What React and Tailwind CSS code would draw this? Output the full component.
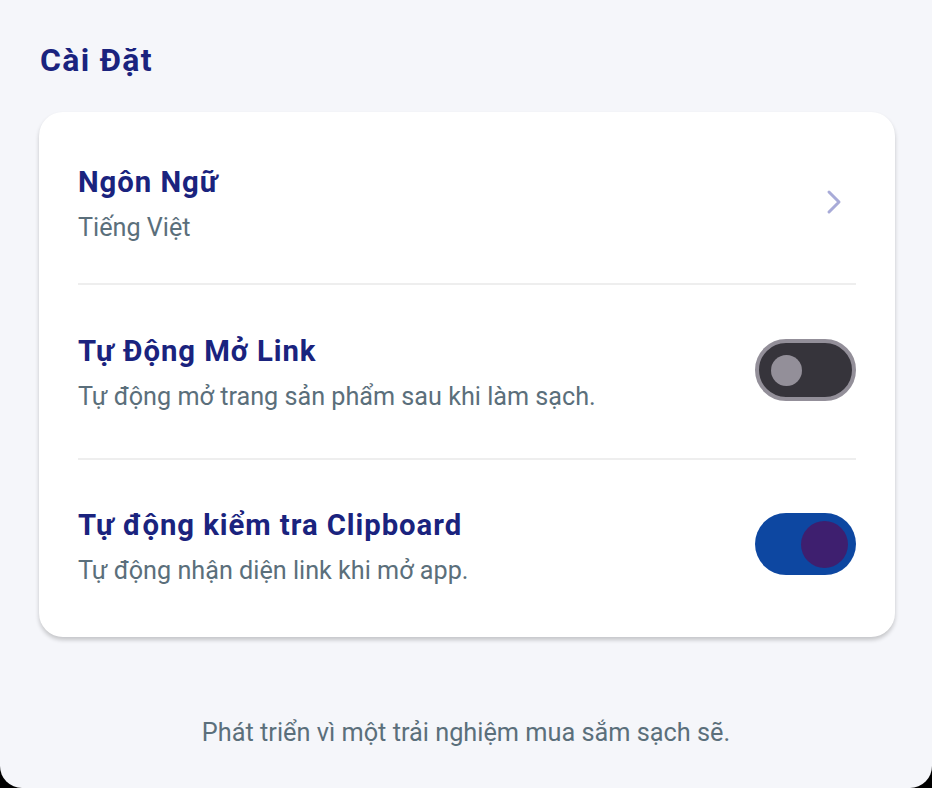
import { ChevronRight } from "lucide-react";

const font = { fontFamily: "Roboto, 'Noto Sans', sans-serif" };

const Toggle = ({ on }) =>
    on ? (
        <div className="w-[101px] h-[62px] mb-[6px] rounded-full bg-[#0d47a1] flex items-center justify-end pr-[8px] shrink-0">
            <div className="w-[47px] h-[47px] rounded-full bg-[#3e1f6f]" />
        </div>
    ) : (
        <div className="w-[101px] h-[62px] mb-[6px] rounded-full bg-[#36343b] border-[4px] border-[#938f99] flex items-center pl-[12px] shrink-0">
            <div className="w-[31px] h-[31px] rounded-full bg-[#938f99]" />
        </div>
    );

const Row = ({ title, subtitle, right, className }) => (
    <div className={`flex items-center justify-between ${className}`}>
        <div className="flex flex-col">
            <span className="text-[29.3px] leading-[32px] tracking-[0.95px] font-bold text-[#1a237e]">{title}</span>
            <span className="text-[25.2px] leading-[28px] mt-[16px] text-[#5b6f7b]">{subtitle}</span>
        </div>
        {right}
    </div>
);

export default function App() {
    return (
        <div className="w-[932px] h-[788px] bg-black" style={font}>
            <div className="h-full bg-[#f5f6fa] rounded-b-[22px] flex flex-col">
                <h1 className="pt-[42px] pl-[40px] text-[32px] leading-[36px] tracking-[1.3px] font-bold text-[#1a237e]">Cài Đặt</h1>

                <div className="mt-[34px] ml-[39px] mr-[37px] bg-white rounded-[24px] shadow-[0_3px_4px_rgba(0,0,0,0.2)] px-[39px]">
                    <Row
                        className="pt-[54px] pb-[41px]"
                        title="Ngôn Ngữ"
                        subtitle="Tiếng Việt"
                        right={<ChevronRight className="w-[40px] h-[40px] text-[#a8abd8] mr-[2px] mb-[4px]" strokeWidth={1.8} />}
                    />
                    <div className="h-[2px] bg-[#eeeeee]" />
                    <Row
                        className="pt-[50px] pb-[47px]"
                        title="Tự Động Mở Link"
                        subtitle="Tự động mở trang sản phẩm sau khi làm sạch."
                        right={<Toggle on={false} />}
                    />
                    <div className="h-[2px] bg-[#eeeeee]" />
                    <Row
                        className="pt-[49px] pb-[52px]"
                        title="Tự động kiểm tra Clipboard"
                        subtitle="Tự động nhận diện link khi mở app."
                        right={<Toggle on />}
                    />
                </div>

                <p className="mt-auto mb-[40px] text-center text-[25.3px] leading-[30px] text-[#5b6f7b]">
                    Phát triển vì một trải nghiệm mua sắm sạch sẽ.
                </p>
            </div>
        </div>
    );
}
